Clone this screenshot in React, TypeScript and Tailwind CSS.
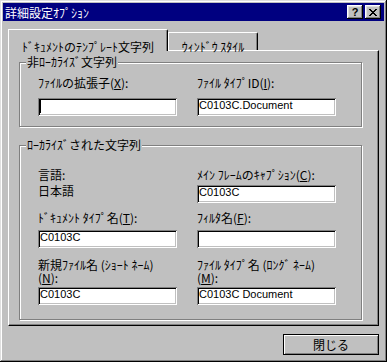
import React from 'react';

const jp = "font-['Noto_Sans_CJK_JP',sans-serif]";

function Field({ value, caret }: { value?: string; caret?: boolean }) {
  return (
    <div className="h-[18px] w-[139px] bg-white pl-[2px] pt-[1px] shadow-[inset_1px_1px_#808080,inset_-1px_-1px_#fff,inset_2px_2px_#000,inset_-2px_-2px_#c0c0c0]">
      {caret ? (
        <div className="mt-[1px] h-[13px] w-px bg-black" />
      ) : (
        <div className="font-['Liberation_Sans',sans-serif] text-[11px] leading-[13px] text-black whitespace-nowrap">
          {value}
        </div>
      )}
    </div>
  );
}

function Group({ title, className, children }: { title: string; className: string; children: React.ReactNode }) {
  return (
    <div
      className={`relative w-[343px] border border-[#808080] shadow-[inset_1px_1px_#fff,1px_1px_#fff] ${className}`}
    >
      {/* legend sits on the etched line */}
      <span className="absolute -top-[8px] left-[6px] bg-[#c0c0c0] px-[1px] text-[12px] leading-[13px] whitespace-nowrap">
        {title}
      </span>
      {children}
    </div>
  );
}

function TitleButton({ children }: { children: React.ReactNode }) {
  return (
    <div className="flex h-[14px] w-[16px] items-center justify-center bg-[#c0c0c0] shadow-[inset_-1px_-1px_#000,inset_1px_1px_#fff,inset_-2px_-2px_#808080,inset_2px_2px_#dfdfdf]">
      {children}
    </div>
  );
}

export default function App() {
  return (
    <div
      className={`h-[362px] w-[387px] bg-[#c0c0c0] p-[3px] text-black ${jp} shadow-[inset_-1px_-1px_#000,inset_1px_1px_#dfdfdf,inset_-2px_-2px_#808080,inset_2px_2px_#fff]`}
    >
      {/* Title bar */}
      <div className="flex h-[18px] items-center bg-[#000080] pl-[2px] pr-[3px]">
        <span className="text-[12px] leading-[13px] text-white whitespace-nowrap">詳細設定ｵﾌﾟｼｮﾝ</span>
        <div className="ml-auto flex gap-[2px]">
          <TitleButton>
            <span className="font-['Liberation_Sans',sans-serif] text-[11px] font-bold leading-[11px]">?</span>
          </TitleButton>
          <TitleButton>
            <svg width="8" height="7" viewBox="0 0 8 7" shapeRendering="crispEdges">
              <path d="M0 0h2v1h1v1h2V1h1V0h2v1H7v1H6v1H5v1h1v1h1v1h1v1H6V6H5V5H3v1H2v1H0V6h1V5h1V4h1V3H2V2H1V1H0z" fill="#000" />
            </svg>
          </TitleButton>
        </div>
      </div>

      <div className="px-[5px]">
        {/* Tabs */}
        <div className="mt-[8px] flex h-[21px] items-end">
          <div className="relative z-10 -mb-[1px] h-[22px] w-[160px] rounded-tr-[2px] border-l border-t border-r border-l-white border-t-white border-r-black bg-[#c0c0c0] pt-[3px] text-center shadow-[inset_-1px_0_#808080]">
            <span className="text-[12px] leading-[13px] whitespace-nowrap">ﾄﾞｷｭﾒﾝﾄのﾃﾝﾌﾟﾚｰﾄ文字列</span>
          </div>
          <div className="h-[18px] w-[90px] rounded-tr-[2px] border-l border-t border-r border-l-white border-t-white border-r-black text-center shadow-[inset_-1px_0_#808080]">
            <span className="text-[12px] leading-[13px] whitespace-nowrap">ｳｨﾝﾄﾞｳ ｽﾀｲﾙ</span>
          </div>
        </div>

        {/* Tab page */}
        <div className="h-[276px] w-[371px] border border-t-white border-l-white border-r-black border-b-black pl-[10px] pt-[11px] shadow-[inset_-1px_-1px_#808080]">
          <Group title="非ﾛｰｶﾗｲｽﾞ文字列" className="h-[65px]">
            <div className="flex gap-[20px] pl-[18px] pt-[13px]">
              <div>
                <div className="text-[12px] leading-[13px] whitespace-nowrap">
                  ﾌｧｲﾙの拡張子(<u>X</u>):
                </div>
                <div className="mt-[9px]">
                  <Field caret />
                </div>
              </div>
              <div>
                <div className="text-[12px] leading-[13px] whitespace-nowrap">
                  ﾌｧｲﾙ ﾀｲﾌﾟID(<u>I</u>):
                </div>
                <div className="mt-[9px]">
                  <Field value="C0103C.Document" />
                </div>
              </div>
            </div>
          </Group>

          <Group title="ﾛｰｶﾗｲｽﾞされた文字列" className="mt-[18px] h-[175px]">
            <div className="flex gap-[20px] pl-[18px] pt-[22px] text-[12px]">
              <div className="w-[139px]">
                <div className="leading-[13px]">言語:</div>
                <div className="mt-[3px] leading-[13px]">日本語</div>
                <div className="mt-[14px] leading-[13px] whitespace-nowrap">
                  ﾄﾞｷｭﾒﾝﾄ ﾀｲﾌﾟ名(<u>T</u>):
                </div>
                <div className="mt-[6px]">
                  <Field value="C0103C" />
                </div>
                <div className="mt-[10px] leading-[13px] whitespace-nowrap">
                  <div>新規ﾌｧｲﾙ名 (ｼｮｰﾄ ﾈｰﾑ)</div>
                  <div>
                    (<u>N</u>):
                  </div>
                </div>
                <div className="mt-[3px]">
                  <Field value="C0103C" />
                </div>
              </div>
              <div className="w-[139px]">
                <div className="leading-[13px] whitespace-nowrap">
                  ﾒｲﾝ ﾌﾚｰﾑのｷｬﾌﾟｼｮﾝ(<u>C</u>):
                </div>
                <div className="mt-[4px]">
                  <Field value="C0103C" />
                </div>
                <div className="mt-[8px] leading-[13px] whitespace-nowrap">
                  ﾌｨﾙﾀ名(<u>F</u>):
                </div>
                <div className="mt-[6px]">
                  <Field />
                </div>
                <div className="mt-[10px] leading-[13px] whitespace-nowrap">
                  <div>ﾌｧｲﾙ ﾀｲﾌﾟ名 (ﾛﾝｸﾞ ﾈｰﾑ)</div>
                  <div>
                    (<u>M</u>):
                  </div>
                </div>
                <div className="mt-[3px]">
                  <Field value="C0103C Document" />
                </div>
              </div>
            </div>
          </Group>
        </div>

        {/* Footer */}
        <div className="mt-[8px] flex">
          <button className="ml-auto h-[21px] w-[96px] border border-black bg-[#c0c0c0] text-[12px] leading-[13px] shadow-[inset_1px_1px_#fff,inset_-1px_-1px_#808080]">
            閉じる
          </button>
        </div>
      </div>
    </div>
  );
}
